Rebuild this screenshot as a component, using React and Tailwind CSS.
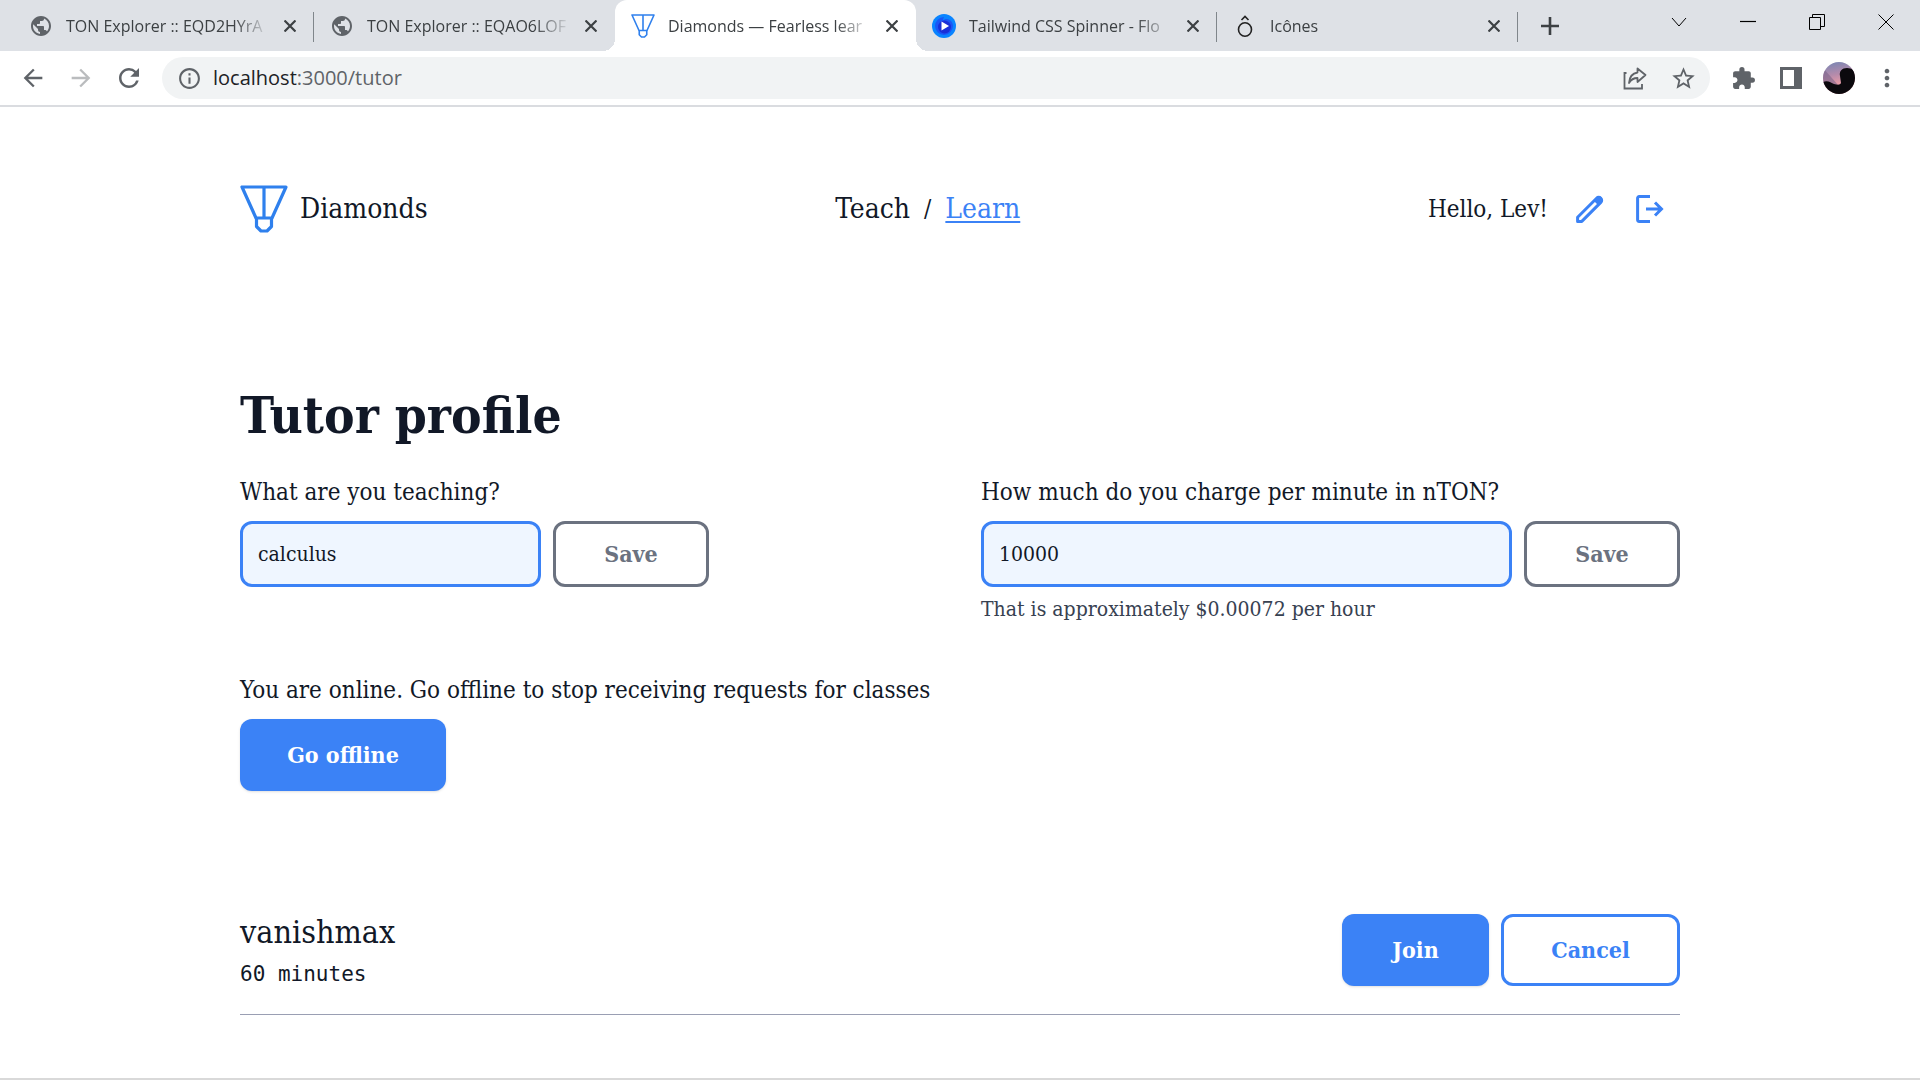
import React from "react";
import {
  MdArrowBack,
  MdArrowForward,
  MdExtension,
  MdInfoOutline,
  MdMoreVert,
  MdPublic,
  MdRefresh,
  MdStarBorder,
} from "react-icons/md";

function DiamondsLogo({ className }) {
  return (
    <svg viewBox="0 0 48 48" className={className} fill="none" stroke="#2f80ed" strokeWidth="3.2" strokeLinejoin="round" aria-hidden="true">
      <path d="M2 2h44L32 33H16Z" />
      <path d="M24 2v31" />
      <path d="M16.5 33v8.500l4.500 4.500h6l4.500-4.500V33" />
    </svg>
  );
}

function SpinnerFavicon() {
  return (
    <svg viewBox="0 0 24 24" className="size-6" aria-hidden="true">
      <circle cx="12" cy="12" r="12" fill="#0a84ff" />
      <path d="M12 3a9 9 0 1 0 9 9c0-4-3-7-7-7a7 7 0 0 0-6 8Z" fill="#1a56f5" />
      <circle cx="12.500" cy="13" r="6.500" fill="#1a2fd8" />
      <path d="M9.500 7.500 17 12l-7.500 4.500Z" fill="#fff" />
    </svg>
  );
}

function IconesFavicon() {
  return (
    <svg viewBox="0 0 24 24" className="size-6" fill="none" stroke="#222" strokeWidth="1.600" aria-hidden="true">
      <ellipse cx="12" cy="15.500" rx="6.500" ry="6.800" />
      <path d="m8.500 6 3.500-3.500 3.500 3.500" />
    </svg>
  );
}

function Globe() {
  return <MdPublic className="size-[26px] text-[#5f6368]" />;
}

const tabs = [
  { title: "TON Explorer :: EQD2HYrA", icon: <Globe />, line: true },
  { title: "TON Explorer :: EQAO6LOF", icon: <Globe /> },
  { title: "Diamonds — Fearless lear", icon: <DiamondsLogo className="size-6" />, active: true },
  { title: "Tailwind CSS Spinner - Flo", icon: <SpinnerFavicon />, line: true },
  { title: "Icônes", icon: <IconesFavicon />, line: true },
];

function Tab({ title, icon, active, line }) {
  return (
    <div className={`relative flex h-[51px] w-[301px] min-w-0 items-center pl-4 pr-3 ${active ? "rounded-t-xl bg-white" : ""}`}>
      {active && (
        <>
          <span className="absolute bottom-0 right-full size-3 bg-[radial-gradient(circle_at_0_0,transparent_12px,white_12px)]" />
          <span className="absolute bottom-0 left-full size-3 bg-[radial-gradient(circle_at_100%_0,transparent_12px,white_12px)]" />
        </>
      )}
      <span className="flex w-6 shrink-0 justify-center">{icon}</span>
      <span className="ml-[13px] flex-1 overflow-hidden whitespace-nowrap text-[16px] text-[#3c4043] [mask-image:linear-gradient(to_right,black_82%,transparent)]">
        {title}
      </span>
      <button aria-label={`Close ${title}`} className="ml-2 flex size-6 shrink-0 items-center justify-center">
        <svg viewBox="0 0 12 12" className="size-3" stroke="#3c4043" strokeWidth="2.200" aria-hidden="true">
          <path d="m.5.5 11 11m0-11-11 11" />
        </svg>
      </button>
      {line && <span className="absolute right-0 top-3 h-[30px] w-px bg-[#80868b]" />}
    </div>
  );
}

function WindowButton({ label, children }) {
  return (
    <button aria-label={label} className="flex h-11 w-[69px] items-center justify-center">
      <svg viewBox="0 0 16 16" className="size-4" fill="none" stroke="#000" shapeRendering="geometricPrecision" aria-hidden="true">
        {children}
      </svg>
    </button>
  );
}

function ToolButton({ label, className = "text-[#5f6368]", children }) {
  return (
    <button aria-label={label} className={`flex h-[42px] w-12 shrink-0 items-center justify-center ${className}`}>
      {children}
    </button>
  );
}

function BrowserChrome() {
  return (
    <div className="font-['Open_Sans',sans-serif]">
      <div className="flex h-[51px] bg-[#dee1e6] pl-[13px]">
        {tabs.map((tab) => (
          <Tab key={tab.title} {...tab} />
        ))}
        <button aria-label="New tab" className="ml-5 flex w-6 items-center justify-center">
          <svg viewBox="0 0 18 18" className="size-[18px]" stroke="#3c4043" strokeWidth="2.600" aria-hidden="true">
            <path d="M9 0v18M0 9h18" />
          </svg>
        </button>
        <div className="ml-auto flex">
          <WindowButton label="Search tabs"><path d="m1 4 7 8 7-8" /></WindowButton>
          <WindowButton label="Minimize"><path d="M0 7.500h16" strokeWidth="1.200" /></WindowButton>
          <WindowButton label="Restore"><path d="M.5 3.500h11v12H.5ZM3.500 3.500v-3h12v12h-4" /></WindowButton>
          <WindowButton label="Close"><path d="m.5.5 15 15m0-15-15 15" /></WindowButton>
        </div>
      </div>
      <div className="flex h-14 items-center border-b-2 border-[#dadce0] bg-white px-[9px]">
        <ToolButton label="Back"><MdArrowBack className="size-7" /></ToolButton>
        <ToolButton label="Forward" className="text-[#babcbe]"><MdArrowForward className="size-7" /></ToolButton>
        <ToolButton label="Reload"><MdRefresh className="size-[30px]" /></ToolButton>
        <div className="mx-[9px] flex h-[42px] flex-1 items-center rounded-full bg-[#f1f3f4] px-[3px]">
          <ToolButton label="Site information"><MdInfoOutline className="size-[25px]" /></ToolButton>
          <a href="#address" className="flex-1 text-[20px] text-[#5f6368]">
            <span className="text-[#202124]">localhost</span>:3000/tutor
          </a>
          <ToolButton label="Share">
            <svg viewBox="0 0 24 24" className="size-6" fill="none" stroke="currentColor" strokeWidth="1.800" aria-hidden="true">
              <path d="M3.500 7H1.500v15.500H19V18" />
              <path d="M14.500 2.500 22.500 9l-8 7v-4c-4 0-6.500 1.500-8.500 5 .5-6 3.500-9.800 8.500-10.500Z" strokeLinejoin="round" />
            </svg>
          </ToolButton>
          <ToolButton label="Bookmark"><MdStarBorder className="size-[27px]" /></ToolButton>
        </div>
        <ToolButton label="Extensions"><MdExtension className="size-[25px]" /></ToolButton>
        <ToolButton label="Side panel">
          <svg viewBox="0 0 22 22" className="size-[22px]" fill="currentColor" aria-hidden="true">
            <path d="M0 0h22v22H0ZM3 3v16h11V3Z" fillRule="evenodd" />
          </svg>
        </ToolButton>
        <ToolButton label="Profile">
          <svg viewBox="0 0 32 32" className="size-8 rounded-full" aria-hidden="true">
            <defs>
              <linearGradient id="sky" x1="0" y1="0" x2="0.2" y2="1">
                <stop offset="0" stopColor="#7486b4" />
                <stop offset="0.450" stopColor="#b58bab" />
                <stop offset="0.750" stopColor="#e79aa6" />
              </linearGradient>
            </defs>
            <path d="M0 0h32v32H0Z" fill="url(#sky)" />
            <path d="M0 6 16 24H0Z" fill="#7b6488" opacity="0.600" />
            <path d="M0 20c5-2 8 1 11 2 4 1 6 1 7-1l-1-7c-1-5 2-8 7-8s8 3 8 6v20H0Z" fill="#0b090d" />
          </svg>
        </ToolButton>
        <ToolButton label="Menu"><MdMoreVert className="size-[28px]" /></ToolButton>
      </div>
    </div>
  );
}

function Header() {
  return (
    <header className="flex h-[60px] items-center justify-between">
      <a href="#home" className="flex items-center gap-3 text-[28px]">
        <DiamondsLogo className="size-12" />
        Diamonds
      </a>
      <nav className="flex items-center gap-[14px] text-[28px]">
        <span>Teach</span>
        <span className="text-[24px]">/</span>
        <a href="#learn" className="text-[#3b82f6] underline decoration-2 underline-offset-[3px]">Learn</a>
      </nav>
      <div className="flex items-center">
        <span className="mr-3 text-[24px]">Hello, Lev!</span>
        <button aria-label="Edit profile" className="flex h-[60px] w-[60px] items-center justify-center">
          <svg viewBox="0 0 28 28" className="size-7" fill="none" stroke="#3b82f6" strokeWidth="3" strokeLinejoin="round" aria-hidden="true">
            <path d="M1.600 22.200 20.600 3.200a2.800 2.800 0 0 1 4.200 4.200L5.800 26.400H1.600Z" />
            <path d="m17.500 5.500 4-4a4 4 0 0 1 5 5l-4 4Z" fill="#3b82f6" stroke="none" />
          </svg>
        </button>
        <button aria-label="Log out" className="flex h-[60px] w-[60px] items-center justify-center">
          <svg viewBox="0 0 28 28" className="size-7" fill="none" stroke="#3b82f6" strokeWidth="3" aria-hidden="true">
            <path d="M14 1.600H3.200a1.600 1.600 0 0 0-1.600 1.600v21.600a1.600 1.600 0 0 0 1.600 1.600H14" />
            <path d="M10 14h15.500M19 7.500l6.500 6.500-6.500 6.500" />
          </svg>
        </button>
      </div>
    </header>
  );
}

const fieldClass =
  "h-[66px] min-w-0 rounded-xl border-3 border-[#3b82f6] bg-[#eff6ff] px-[15px] text-[21px] outline-none";

function Save() {
  return (
    <button className="h-[66px] w-[156px] shrink-0 rounded-xl border-3 border-[#6b7280] text-[23px] font-bold text-[#6b7280]">
      Save
    </button>
  );
}

export default function App() {
  return (
    <div className="flex min-h-screen flex-col bg-white">
      <BrowserChrome />
      <main className="mx-auto w-full max-w-[1440px] flex-1 pt-[72px] font-['DejaVu_Serif_Condensed','DejaVu_Serif',serif] text-[#111827]">
        <Header />
        <h1 className="mt-[144px] text-[51px] font-bold leading-[64px]">Tutor profile</h1>
        <div className="mt-6 grid grid-cols-2 gap-[42px]">
          <div>
            <label htmlFor="subject" className="block text-[24px] leading-[42px]">What are you teaching?</label>
            <div className="mt-2 flex gap-3">
              <input id="subject" defaultValue="calculus" className={`w-[301px] ${fieldClass}`} />
              <Save />
            </div>
          </div>
          <div>
            <label htmlFor="price" className="block text-[24px] leading-[42px]">How much do you charge per minute in nTON?</label>
            <div className="mt-2 flex gap-3">
              <input id="price" defaultValue="10000" className={`flex-1 ${fieldClass}`} />
              <Save />
            </div>
            <p className="mt-2 text-[21px] leading-[28px] text-[#374151]">That is approximately $0.00072 per hour</p>
          </div>
        </div>
        <p className="mt-[46px] text-[24px] leading-[42px]">You are online. Go offline to stop receiving requests for classes</p>
        <button className="mt-2 block h-[72px] w-[206px] rounded-xl bg-[#3b82f6] text-[23px] font-bold text-white shadow">
          Go offline
        </button>
        <section className="mt-[123px] flex items-start justify-between border-b border-[#9a9fb3] pb-6">
          <div>
            <h2 className="text-[32px] leading-[36px]">vanishmax</h2>
            <p className="mt-2 font-['DejaVu_Sans_Mono',monospace] text-[21px] leading-[32px]">60 minutes</p>
          </div>
          <div className="flex gap-3">
            <button className="h-[72px] w-[147px] rounded-xl bg-[#3b82f6] text-[23px] font-bold text-white shadow">Join</button>
            <button className="h-[72px] w-[179px] rounded-xl border-3 border-[#3b82f6] text-[23px] font-bold text-[#3b82f6]">Cancel</button>
          </div>
        </section>
      </main>
      <div className="h-0.5 bg-[#d9d9d9]" />
    </div>
  );
}
